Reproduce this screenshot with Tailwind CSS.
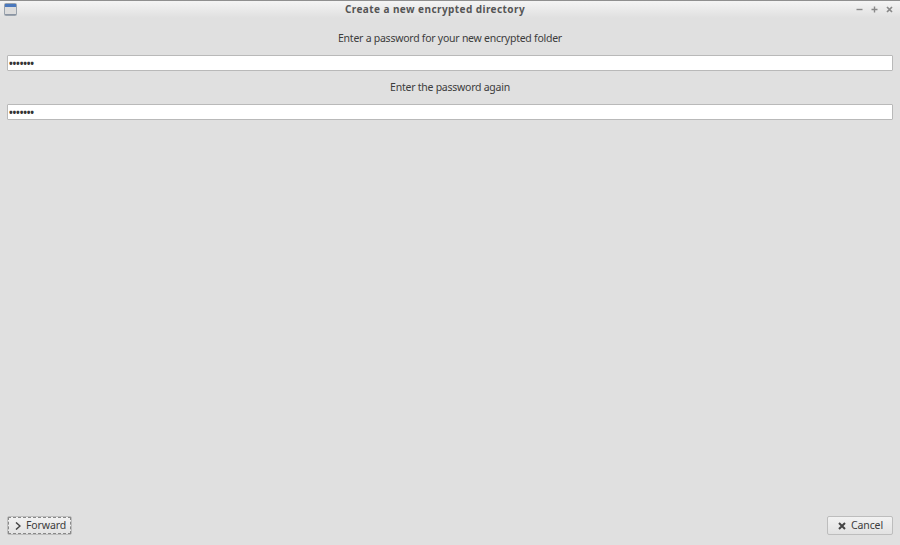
<!DOCTYPE html>
<html>
<head>
<meta charset="utf-8">
<title>Create a new encrypted directory</title>
<script src="https://cdn.jsdelivr.net/npm/@tailwindcss/browser@4"></script>
</head>
<body class="w-[900px] h-[545px] overflow-hidden bg-[#e0e0e0] font-['Noto_Sans',sans-serif] text-[#3c3c3c]">
  <div class="flex flex-col h-full">
    <!-- Title bar -->
    <div class="relative flex items-center justify-center h-[18px] pr-[30px] shrink-0 border-t border-[#8f8f8f] bg-gradient-to-b from-[#f4f4f4] to-[#e0e0e0]">
      <svg class="absolute left-[4px] top-[2px]" width="13" height="13" viewBox="0 0 13 13">
        <rect x="0.5" y="0.5" width="12" height="12" rx="1" fill="#dcdcdc" stroke="#9aa3ad"/>
        <rect x="1" y="1" width="11" height="3" fill="#4a78bd"/>
        <rect x="1" y="11" width="11" height="1" fill="#8a94a3"/>
      </svg>
      <span class="text-[10px] font-bold tracking-[0.43px] text-[#555555]">Create a new encrypted directory</span>
      <div class="absolute right-[7px] top-[5px] flex items-center gap-[8px]">
        <svg width="7" height="7" viewBox="0 0 7 7"><path d="M0.5 3.5H6.5" stroke="#888" stroke-width="1.4"/></svg>
        <svg width="7" height="7" viewBox="0 0 7 7"><path d="M0.5 3.5H6.5M3.5 0.5V6.5" stroke="#888" stroke-width="1.4"/></svg>
        <svg width="7" height="7" viewBox="0 0 7 7"><path d="M1 1L6 6M6 1L1 6" stroke="#888" stroke-width="1.7"/></svg>
      </div>
    </div>

    <!-- Form -->
    <div class="flex-1 flex flex-col px-[7px]">
      <p class="mt-[13px] h-[15px] leading-[15px] text-center text-[10.5px] tracking-[-0.25px]">Enter a password for your new encrypted folder</p>
      <div class="mt-[9px] flex items-center h-[16px] bg-white border border-[#b9b9b9] rounded-[1px] pl-[1px]">
        <span class="text-[10px] font-bold leading-none tracking-[-0.2px] text-[#333]">•••••••</span>
      </div>
      <p class="mt-[9px] h-[15px] leading-[15px] text-center text-[10.5px] tracking-[-0.25px]">Enter the password again</p>
      <div class="mt-[9px] flex items-center h-[16px] bg-white border border-[#b9b9b9] rounded-[1px] pl-[1px]">
        <span class="text-[10px] font-bold leading-none tracking-[-0.2px] text-[#333]">•••••••</span>
      </div>
    </div>

    <!-- Buttons -->
    <div class="flex justify-between px-[7px] pb-[10px]">
      <button class="flex items-center justify-center w-[65px] h-[19px] pl-[2px] rounded-[2px] border border-[#bdbdbd] bg-gradient-to-b from-[#f2f2f2] to-[#e2e2e2] outline-1 outline-dashed -outline-offset-2 outline-[#888]">
        <svg class="mr-[5px]" width="6" height="8" viewBox="0 0 6 8"><path d="M1 0.5L5 4L1 7.5" fill="none" stroke="#444" stroke-width="1.5"/></svg>
        <span class="text-[10.5px] tracking-[-0.1px]">Forward</span>
      </button>
      <button class="flex items-center justify-center w-[66px] h-[19px] pl-[1px] rounded-[2px] border border-[#bdbdbd] bg-gradient-to-b from-[#f2f2f2] to-[#e2e2e2]">
        <svg class="mr-[5px]" width="8" height="8" viewBox="0 0 8 8"><path d="M1 1L7 7M7 1L1 7" stroke="#444" stroke-width="2"/></svg>
        <span class="text-[10.5px] tracking-[-0.1px]">Cancel</span>
      </button>
    </div>
  </div>
</body>
</html>
